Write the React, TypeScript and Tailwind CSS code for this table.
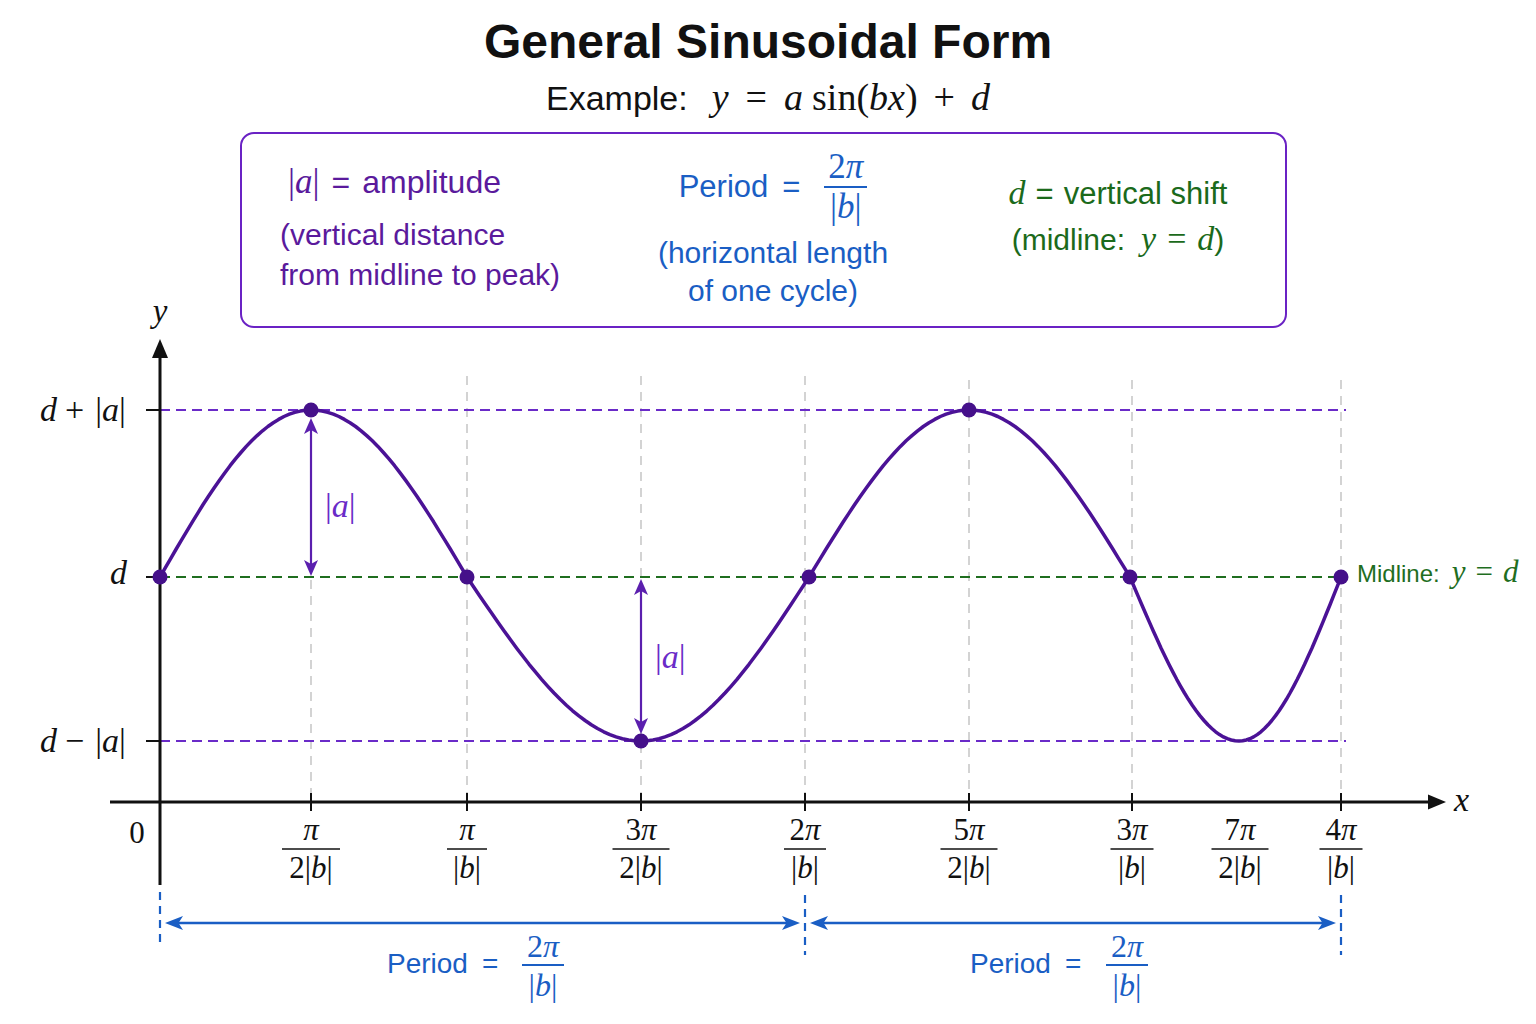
import React from "react";

const SERIF = "Liberation Serif, Times New Roman, serif";
const SANS = "Liberation Sans, Arial, sans-serif";

const PURPLE = "#4b1296";
const DASH_PURPLE = "#6a2bc8";
const GREEN = "#1f6e1f";
const BLUE = "#1a5ec4";
const INK = "#111111";

const MID = 577;
const TOP = 410;
const BOT = 741;

// key points of the wave (x, level); the curve is built quarter by quarter
const KEYS: [number, number][] = [
  [160, MID],
  [311, TOP],
  [467, MID],
  [641, BOT],
  [809, MID],
  [969, TOP],
  [1130, MID],
  [1239, BOT],
  [1341, MID],
];

function wavePath() {
  const pts: string[] = [];
  for (let i = 0; i < KEYS.length - 1; i++) {
    const [x0, y0] = KEYS[i];
    const [x1, y1] = KEYS[i + 1];
    const fromMid = y0 === MID;
    const ext = fromMid ? y1 : y0;
    for (let k = i === 0 ? 0 : 1; k <= 28; k++) {
      const t = k / 28;
      const x = x0 + (x1 - x0) * t;
      const f = fromMid ? Math.sin((Math.PI / 2) * t) : Math.cos((Math.PI / 2) * t);
      const y = MID + (ext - MID) * f;
      pts.push(`${x.toFixed(1)},${y.toFixed(1)}`);
    }
  }
  return "M" + pts.join(" L");
}

const DOTS: [number, number][] = [
  [160, MID],
  [311, TOP],
  [467, MID],
  [641, BOT],
  [809, MID],
  [969, TOP],
  [1130, MID],
  [1341, MID],
];

const TICKS = [
  { x: 311, num: "", den2: true, w: 58 },
  { x: 467, num: "", den2: false, w: 40 },
  { x: 641, num: "3", den2: true, w: 57 },
  { x: 805, num: "2", den2: false, w: 42 },
  { x: 969, num: "5", den2: true, w: 57 },
  { x: 1132, num: "3", den2: false, w: 43 },
  { x: 1240, num: "7", den2: true, w: 57, noTick: true },
  { x: 1341, num: "4", den2: false, w: 43 },
];

const GRID = [
  { x: 311, y1: 420 },
  { x: 467, y1: 376 },
  { x: 641, y1: 376 },
  { x: 805, y1: 376 },
  { x: 969, y1: 380 },
  { x: 1132, y1: 380 },
  { x: 1341, y1: 380 },
];

type Dir = "l" | "r" | "u" | "d";

// notched arrow head, tip at (x, y)
function Head({ x, y, dir, color, len = 16, half = 7 }: { x: number; y: number; dir: Dir; color: string; len?: number; half?: number }) {
  const n = len * 0.75;
  let pts = "";
  if (dir === "r") pts = `${x},${y} ${x - len},${y - half} ${x - n},${y} ${x - len},${y + half}`;
  if (dir === "l") pts = `${x},${y} ${x + len},${y - half} ${x + n},${y} ${x + len},${y + half}`;
  if (dir === "u") pts = `${x},${y} ${x - half},${y + len} ${x},${y + n} ${x + half},${y + len}`;
  if (dir === "d") pts = `${x},${y} ${x - half},${y - len} ${x},${y - n} ${x + half},${y - len}`;
  return <polygon points={pts} fill={color} />;
}

function TickLabel({ x, num, den2, w }: { x: number; num: string; den2: boolean; w: number }) {
  return (
    <g fontFamily={SERIF} fontSize={31} fill={INK} textAnchor="middle">
      <text x={x} y={840}>
        {num}
        <tspan fontStyle="italic">π</tspan>
      </text>
      <line x1={x - w / 2} x2={x + w / 2} y1={849} y2={849} stroke={INK} strokeWidth={1.7} />
      <text x={x} y={878}>
        {den2 ? "2|" : "|"}
        <tspan fontStyle="italic">b</tspan>|
      </text>
    </g>
  );
}

function PeriodLabel({ x, fx }: { x: number; fx: number }) {
  return (
    <g fill={BLUE}>
      <text x={x} y={973} fontFamily={SANS} fontSize={28}>
        Period
      </text>
      <text x={x + 95} y={973} fontFamily={SANS} fontSize={28}>
        =
      </text>
      <text x={fx} y={957} textAnchor="middle" fontFamily={SERIF} fontSize={32}>
        2<tspan fontStyle="italic">π</tspan>
      </text>
      <line x1={fx - 21} x2={fx + 21} y1={965} y2={965} stroke={BLUE} strokeWidth={1.8} />
      <text x={fx} y={996} textAnchor="middle" fontFamily={SERIF} fontSize={32}>
        |<tspan fontStyle="italic">b</tspan>|
      </text>
    </g>
  );
}

function Chart() {
  return (
    <svg width="1536" height="696" viewBox="0 328 1536 696" className="block overflow-visible">
      {/* grey guides */}
      {GRID.map((g) => (
        <line key={g.x} x1={g.x} x2={g.x} y1={g.y1} y2={802} stroke="#c9c9c9" strokeWidth={1.6} strokeDasharray="9 7" />
      ))}

      {/* level lines */}
      <line x1={160} x2={1346} y1={TOP} y2={TOP} stroke={DASH_PURPLE} strokeWidth={2} strokeDasharray="10 6" />
      <line x1={160} x2={1341} y1={MID} y2={MID} stroke={GREEN} strokeWidth={2} strokeDasharray="10 6" />
      <line x1={160} x2={1346} y1={BOT} y2={BOT} stroke={DASH_PURPLE} strokeWidth={2} strokeDasharray="10 6" />

      {/* axes */}
      <line x1={160} x2={160} y1={352} y2={885} stroke={INK} strokeWidth={3} />
      <polygon points="160,339 152,358 168,358" fill={INK} />
      <line x1={110} x2={1432} y1={802} y2={802} stroke={INK} strokeWidth={3} />
      <polygon points="1446,802 1428,794.5 1428,809.5" fill={INK} />
      {[TOP, MID, BOT].map((y) => (
        <line key={y} x1={146} x2={160} y1={y} y2={y} stroke={INK} strokeWidth={2} />
      ))}
      {TICKS.filter((t) => !t.noTick).map((t) => (
        <line key={t.x} x1={t.x} x2={t.x} y1={793} y2={811} stroke={INK} strokeWidth={2} />
      ))}

      {/* axis names */}
      <text x={160} y={322} textAnchor="middle" fontFamily={SERIF} fontSize={33} fontStyle="italic" fill={INK}>
        y
      </text>
      <text x={1454} y={811} fontFamily={SERIF} fontSize={34} fontStyle="italic" fill={INK}>
        x
      </text>
      <text x={137} y={843} textAnchor="middle" fontFamily={SERIF} fontSize={31} fill={INK}>
        0
      </text>

      {/* y labels */}
      <g fontFamily={SERIF} fontSize={34} fill={INK}>
        <text x={40} y={421}>
          <tspan fontStyle="italic">d</tspan>
          <tspan dx={8}>+</tspan>
          <tspan dx={11}>|</tspan>
          <tspan fontStyle="italic">a</tspan>|
        </text>
        <text x={110} y={584} fontStyle="italic">
          d
        </text>
        <text x={40} y={752}>
          <tspan fontStyle="italic">d</tspan>
          <tspan dx={8}>−</tspan>
          <tspan dx={11}>|</tspan>
          <tspan fontStyle="italic">a</tspan>|
        </text>
      </g>

      {/* x labels */}
      {TICKS.map((t) => (
        <TickLabel key={t.x} x={t.x} num={t.num} den2={t.den2} w={t.w} />
      ))}

      {/* amplitude arrows */}
      <line x1={311} x2={311} y1={428} y2={566} stroke="#5b1fae" strokeWidth={2.2} />
      <Head x={311} y={418} dir="u" color="#5b1fae" len={16} half={7} />
      <Head x={311} y={576} dir="d" color="#5b1fae" len={16} half={7} />
      <text x={325} y={517} fontFamily={SERIF} fontSize={34} fill="#6a2bc8">
        |<tspan fontStyle="italic">a</tspan>|
      </text>
      <line x1={641} x2={641} y1={590} y2={724} stroke="#5b1fae" strokeWidth={2.2} />
      <Head x={641} y={579} dir="u" color="#5b1fae" len={16} half={7} />
      <Head x={641} y={734} dir="d" color="#5b1fae" len={16} half={7} />
      <text x={655} y={668} fontFamily={SERIF} fontSize={34} fill="#6a2bc8">
        |<tspan fontStyle="italic">a</tspan>|
      </text>

      {/* wave */}
      <path d={wavePath()} fill="none" stroke={PURPLE} strokeWidth={3.5} strokeLinejoin="round" strokeLinecap="round" />
      {DOTS.map(([x, y]) => (
        <circle key={x} cx={x} cy={y} r={7.5} fill="#45108a" />
      ))}

      {/* midline label */}
      <text x={1357} y={582} fill={GREEN}>
        <tspan fontFamily={SANS} fontSize={24}>
          Midline:
        </tspan>
        <tspan dx={12} fontFamily={SERIF} fontSize={31} fontStyle="italic">
          y
        </tspan>
        <tspan dx={10} fontFamily={SERIF} fontSize={31}>
          =
        </tspan>
        <tspan dx={10} fontFamily={SERIF} fontSize={31} fontStyle="italic">
          d
        </tspan>
      </text>

      {/* period brackets */}
      <g stroke={BLUE} strokeWidth={2.2} strokeDasharray="8 6">
        <line x1={160} x2={160} y1={892} y2={948} />
        <line x1={805} x2={805} y1={895} y2={955} />
        <line x1={1341} x2={1341} y1={895} y2={955} />
      </g>
      <line x1={176} x2={790} y1={923} y2={923} stroke={BLUE} strokeWidth={2.5} />
      <Head x={165} y={923} dir="l" color={BLUE} len={18} half={7} />
      <Head x={800} y={923} dir="r" color={BLUE} len={18} half={7} />
      <line x1={822} x2={1326} y1={923} y2={923} stroke={BLUE} strokeWidth={2.5} />
      <Head x={810} y={923} dir="l" color={BLUE} len={18} half={7} />
      <Head x={1336} y={923} dir="r" color={BLUE} len={18} half={7} />
      <PeriodLabel x={387} fx={543} />
      <PeriodLabel x={970} fx={1127} />
    </svg>
  );
}

function InfoBox() {
  return (
    <div className="mt-[15px] ml-[240px] w-[1047px] h-[196px] border-2 border-[#6a22c4] rounded-[14px] flex items-start">
      {/* amplitude */}
      <div className="w-[381px] pl-[38px] pt-[28px] text-[#5a1a9c]">
        <div className="ml-[8px] text-[32px] leading-[40px] whitespace-nowrap">
          <span className="font-['Liberation_Serif',serif] text-[35px]">
            |<i>a</i>|
          </span>
          <span className="ml-[12px]">=</span>
          <span className="ml-[12px]">amplitude</span>
        </div>
        <div className="mt-[13px] text-[30px] leading-[40px]">(vertical distance</div>
        <div className="text-[30px] leading-[40px]">from midline to peak)</div>
      </div>

      {/* period */}
      <div className="w-[300px] pt-[14px] flex flex-col items-center text-[#1a5ec4]">
        <div className="flex items-center">
          <span className="text-[31px] leading-[40px]">Period</span>
          <span className="ml-[14px] text-[31px] leading-[40px]">=</span>
          <span className="ml-[24px] flex flex-col items-center font-['Liberation_Serif',serif] text-[35px]">
            <span className="leading-[38px]">
              2<i>π</i>
            </span>
            <span className="w-[43px] h-[2px] bg-[#1a5ec4]" />
            <span className="leading-[38px]">
              |<i>b</i>|
            </span>
          </span>
        </div>
        <div className="mt-[8px] text-[30px] leading-[38px]">(horizontal length</div>
        <div className="text-[30px] leading-[38px]">of one cycle)</div>
      </div>

      {/* vertical shift */}
      <div className="ml-[80px] w-[230px] pt-[39px] flex flex-col items-center text-[#1b6a1b]">
        <div className="text-[31px] leading-[40px] whitespace-nowrap">
          <i className="font-['Liberation_Serif',serif] text-[34px]">d</i>
          <span className="ml-[10px]">=</span>
          <span className="ml-[10px]">vertical shift</span>
        </div>
        <div className="mt-[5px] text-[30px] leading-[40px] whitespace-nowrap">
          (midline:
          <i className="ml-[16px] font-['Liberation_Serif',serif] text-[34px]">y</i>
          <span className="mx-[11px] font-['Liberation_Serif',serif] text-[34px]">=</span>
          <i className="font-['Liberation_Serif',serif] text-[34px]">d</i>)
        </div>
      </div>
    </div>
  );
}

export default function App() {
  return (
    <div className="w-[1536px] h-[1024px] bg-white overflow-hidden font-['Liberation_Sans',Arial,sans-serif]">
      <h1 className="pt-[18px] text-center text-[48px] leading-[48px] font-bold text-[#111]">General Sinusoidal Form</h1>
      <div className="mt-[11px] h-[40px] text-center text-[#111] whitespace-nowrap">
        <span className="text-[34px] leading-[40px]">Example:</span>
        <span className="ml-[24px] font-['Liberation_Serif',serif] text-[38px] leading-[40px]">
          <i>y</i>
          <span className="mx-[17px]">=</span>
          <i>a</i>
          <span className="ml-[9px]">sin</span>(<i>b</i>
          <i>x</i>)<span className="mx-[16px]">+</span>
          <i>d</i>
        </span>
      </div>
      <InfoBox />
      <Chart />
    </div>
  );
}
